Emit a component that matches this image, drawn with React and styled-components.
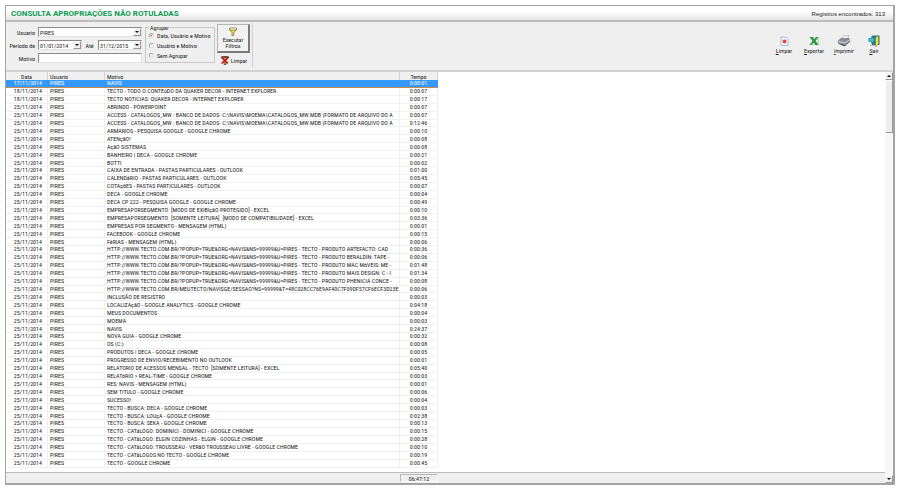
import React, { useState } from 'react';
import styled, { createGlobalStyle } from 'styled-components';

const GlobalStyle = createGlobalStyle`
  * {
    box-sizing: border-box;
  }

  body {
    margin: 0;
    background: #fff;
  }

  body, button, input, select {
    font-family: 'Roboto Condensed', 'Liberation Sans', Arial, sans-serif;
    font-size: 6px;
    line-height: 7px;
    color: #222;
  }
`;

const Page = styled.div`
  display: flex;
  flex-direction: column;
  height: 100vh;
  padding: 5px;
`;

const Window = styled.main`
  flex: 1;
  min-height: 0;
  display: flex;
  flex-direction: column;
  border: 1px solid #a4a4a4;
  border-right: 2px solid #a4a4a4;
  border-bottom: 2px solid #a4a4a4;
  background: #efefef;
`;

const TitleBar = styled.header`
  display: flex;
  align-items: center;
  justify-content: space-between;
  height: 16px;
  padding: 0 8px 0 5px;
  border-bottom: 2px solid #bcbcbc;
  background: linear-gradient(#fff 40%, #e4e4e4);
`;

const Title = styled.h1`
  margin: 0;
  padding-top: 1px;
  font: bold 8px/10px Roboto, 'Liberation Sans', Arial, sans-serif;
  color: #0a9a50;
`;

const Count = styled.span`
  padding-top: 1px;
  font: 6px/8px 'Liberation Sans', Arial, sans-serif;
`;

const Toolbar = styled.section`
  display: flex;
  justify-content: space-between;
  height: 50px;
  padding: 1px 4px 0 6px;
  border-bottom: 2px solid #d2d2d2;
`;

const Filters = styled.form`
  display: flex;
  gap: 2px;
  margin-bottom: 3px;
  padding-right: 2px;
  border-right: 1px solid #d0d0d0;
`;

const Fields = styled.div`
  display: grid;
  grid-template-columns: 24px 104px;
  grid-auto-rows: 10px;
  gap: 3px 2px;
  padding: 4px 1px 0 0;
`;

const Label = styled.label`
  display: flex;
  align-items: center;
  justify-content: flex-end;
  padding-right: 1px;
  white-space: nowrap;
`;

const FieldGroup = styled.div`
  display: flex;
  justify-content: space-between;
`;

const Input = styled.input`
  width: 100%;
  height: 10px;
  padding: 0 1px;
  border: 1px solid #8a8a8a;
  border-right-color: #e2e2e2;
  border-bottom-color: #e2e2e2;
  border-radius: 0;
  background: #fff;
`;

const SelectBox = styled.div`
  position: relative;
  width: ${props => props.$width || '100%'};
`;

const Select = styled.select`
  display: block;
  width: 100%;
  height: 10px;
  padding: 0 9px 0 1px;
  border: 1px solid #8a8a8a;
  border-right-color: #e2e2e2;
  border-bottom-color: #e2e2e2;
  border-radius: 0;
  appearance: none;
  background: #fff;
`;

const SelectArrow = styled.span`
  position: absolute;
  top: 1px;
  right: 1px;
  display: grid;
  place-items: center;
  width: 8px;
  height: 8px;
  border: 1px solid #fafafa;
  border-right-color: #999;
  border-bottom-color: #999;
  background: #eee;
  pointer-events: none;
`;

const Group = styled.fieldset`
  display: flex;
  flex-direction: column;
  gap: 3px;
  width: 70px;
  height: 39px;
  min-width: 0;
  margin: 1px 0 0;
  padding: 1px 0 0 3px;
  border: 1px solid #c8c8c8;
`;

const Legend = styled.legend`
  padding: 0 1px;
`;

const RadioLabel = styled.label`
  display: flex;
  align-items: center;
  gap: 3px;
  white-space: nowrap;
`;

const Radio = styled.input`
  appearance: none;
  width: 5px;
  height: 5px;
  margin: 0;
  border: 1px solid #a0a0a0;
  border-right-color: #ddd;
  border-bottom-color: #ddd;
  border-radius: 50%;
  background: #fff;

  &:checked {
    padding: 1px;
    background: #333;
    background-clip: content-box;
  }
`;

const Actions = styled.div`
  display: flex;
  flex-direction: column;
  align-items: center;
  gap: 2px;
  padding-top: 1px;
`;

const RunButton = styled.button`
  display: flex;
  flex-direction: column;
  align-items: center;
  width: 33px;
  height: 29px;
  padding: 2px 0 0;
  border: 1px solid #b4b4b4;
  border-right: 2px solid #7c7c7c;
  border-bottom: 2px solid #7c7c7c;
  background: #f2f2f2;
  line-height: 6px;
`;

const FlatButton = styled.button`
  display: flex;
  align-items: center;
  gap: 1px;
  padding: 0;
  border: 0;
  background: none;
`;

const ToolButtons = styled.div`
  display: flex;
  align-items: flex-start;
  padding-top: 12px;
`;

const ToolButton = styled.button`
  display: flex;
  flex-direction: column;
  align-items: center;
  width: 30px;
  padding: 0;
  border: 0;
  background: none;
`;

const Content = styled.section`
  flex: 1;
  min-height: 0;
  display: flex;
`;

const GridArea = styled.div`
  flex: 1;
  min-width: 0;
  display: flex;
  flex-direction: column;
  background: #fff;
`;

const TableWrap = styled.div`
  flex: 1;
  min-height: 0;
  padding-bottom: 4px;
  overflow: hidden;
`;

const Table = styled.table`
  width: 432px;
  height: 100%;
  table-layout: fixed;
  border-collapse: separate;
  border-spacing: 0;
`;

const Col = styled.col`
  width: ${props => props.$width};
`;

const Th = styled.th`
  padding: 1px 2px 0;
  border-right: 1px solid #d2d2d2;
  background: #f0f0f0;
  font-weight: normal;
  text-align: ${props => props.$align || 'left'};
`;

const Td = styled.td`
  padding: 0 2px;
  border-right: 1px solid #f0f0f0;
  border-bottom: 1px solid #f0f0f0;
  line-height: 6px;
  overflow: hidden;
  white-space: pre;
  text-align: ${props => props.$align || 'left'};
`;

const DateTd = styled(Td)`
  padding: 0 5px 0 0;
  text-align: right;
`;

const Row = styled.tr`
  background: ${props => (props.$selected ? '#3399ff' : '#fff')};
  color: ${props => (props.$selected ? '#fff' : '#222')};

  ${Td} {
    border-color: ${props => (props.$selected ? '#3399ff' : '#f0f0f0')};
    border-bottom-color: ${props => (props.$selected ? '#c98a4a' : '#f0f0f0')};
  }
`;

const Footer = styled.footer`
  display: flex;
  height: 11px;
  border-top: 1px solid #bcbcbc;
  background: #efefef;
`;

const Total = styled.output`
  width: 38px;
  margin: 1px 0 1px 394px;
  border: 1px solid #bbb;
  border-right-color: #fff;
  border-bottom-color: #fff;
  line-height: 7px;
  text-align: center;
`;

const ScrollTrack = styled.div`
  display: flex;
  flex-direction: column;
  width: 8px;
  background: #f8f8f8;
`;

const ScrollButton = styled.button`
  display: grid;
  place-items: center;
  width: 8px;
  height: 8px;
  padding: 0;
  border: 1px solid #fff;
  border-right-color: #999;
  border-bottom-color: #999;
  background: #eee;
`;

const ScrollThumb = styled.div`
  height: 53px;
  margin-bottom: auto;
  border: 1px solid #fff;
  border-right-color: #999;
  border-bottom-color: #999;
  background: #eee;
`;

const Triangle = ({ up }) => (
  <svg width="4" height="2" viewBox="0 0 4 2">
    <path d={up ? 'M0 2 L2 0 L4 2Z' : 'M0 0 L2 2 L4 0Z'} fill="#111" />
  </svg>
);

const FunnelIcon = () => (
  <svg width="10" height="10" viewBox="0 0 10 10">
    <path d="M1 2 L4 5.5 V9 L6 8 V5.5 L9 2Z" fill="#f6e61e" stroke="#555" strokeWidth=".6" />
    <ellipse cx="5" cy="2" rx="4" ry="1.2" fill="#fff9b0" stroke="#555" strokeWidth=".6" />
  </svg>
);

const FunnelClearIcon = () => (
  <svg width="10" height="10" viewBox="0 0 10 10">
    <path d="M1 2 L4 5.5 V9.5 H6 V5.5 L9 2Z" fill="#c9b04a" stroke="#222" strokeWidth=".6" />
    <path d="M1.5 2 L8 8.5 M8.5 2 L1.5 8.5" stroke="#cc1414" strokeWidth="1.6" />
    <ellipse cx="5" cy="1.8" rx="3.6" ry=".9" fill="#5a4a2a" />
  </svg>
);

const PageIcon = () => (
  <svg width="12" height="12" viewBox="0 0 12 12">
    <path d="M3 2 H8 L10 4 V10.5 H3Z" fill="#f0f5ff" stroke="#93a9d8" strokeWidth=".8" />
    <circle cx="6.5" cy="6.5" r="1.9" fill="#e8453a" />
  </svg>
);

const ExcelIcon = () => (
  <svg width="12" height="12" viewBox="0 0 12 12">
    <rect x="5" y="2.5" width="5.5" height="7" fill="#e4f3e2" stroke="#8fc491" strokeWidth=".6" />
    <path d="M1.5 2 H4.5 L6.3 4.2 L8.5 2 H10.5 L7.6 5.8 L10.5 10 H7.5 L5.8 7.6 L3.5 10 H1.5 L4.6 6Z" fill="#2c9140" />
  </svg>
);

const PrinterIcon = () => (
  <svg width="14" height="12" viewBox="0 0 14 12">
    <path d="M6 1 L12 .5 L10 5 L5 4.5Z" fill="#f5f7fb" stroke="#999" strokeWidth=".5" />
    <path d="M1 6 L4 3.5 L12 3.5 L13 6.5 L8 11 L2 9Z" fill="#8b8d96" stroke="#55565e" strokeWidth=".5" />
    <path d="M1.5 6.3 L7.5 8 L12.5 5" fill="none" stroke="#e2e2ea" strokeWidth=".9" />
    <path d="M4 9.4 L8 10.6" stroke="#333" strokeWidth=".8" />
  </svg>
);

const ExitIcon = () => (
  <svg width="12" height="12" viewBox="0 0 12 12">
    <path d="M4 .5 H11.5 V10 H4Z" fill="#1b7f8c" />
    <path d="M7.5 2.5 L10.5 .8 V9 L7.5 11.8Z" fill="#f7e528" stroke="#555" strokeWidth=".4" />
    <path d="M.8 3.5 H3.5 V1.5 L7 5 L3.5 8.5 V6.5 H.8Z" fill="#35c3dc" stroke="#14606e" strokeWidth=".5" />
    <path d="M2 10.3 H7" stroke="#888" strokeWidth=".7" />
  </svg>
);

const tools = [
  { label: 'Limpar', Icon: PageIcon },
  { label: 'Exportar', Icon: ExcelIcon },
  { label: 'Imprimir', Icon: PrinterIcon },
  { label: 'Sair', Icon: ExitIcon }
];

const groupings = ['Data, Usuário e Motivo', 'Usuário e Motivo', 'Sem Agrupar'];

const popup = 'HTTP://WWW.TECTO.COM.BR/?POPUP=TRUE&ORG=NAVIS&NS=99999&U=PIRES - TECTO - PRODUTO ';

const records = [
  ['17/11/2014', 'NAVIS', '0:00:01'],
  ['18/11/2014', 'TECTO - TODO O CONTEúDO DA QUAKER DECOR - INTERNET EXPLORER', '0:00:07'],
  ['18/11/2014', 'TECTO NOTíCIAS: QUAKER DECOR - INTERNET EXPLORER', '0:00:17'],
  ['25/11/2014', 'ABRINDO - POWERPOINT', '0:00:07'],
  ['25/11/2014', 'ACCESS - CATALOGOS_MW : BANCO DE DADOS- C:\\NAVIS\\MOEMA\\CATALOGOS_MW.MDB (FORMATO DE ARQUIVO DO A', '0:00:07'],
  ['25/11/2014', 'ACCESS - CATALOGOS_MW : BANCO DE DADOS- C:\\NAVIS\\MOEMA\\CATALOGOS_MW.MDB (FORMATO DE ARQUIVO DO A', '0:12:46'],
  ['25/11/2014', 'ARMARIOS - PESQUISA GOOGLE - GOOGLE CHROME', '0:00:10'],
  ['25/11/2014', 'ATENçãO!', '0:00:08'],
  ['25/11/2014', 'AçãO SISTEMAS', '0:00:08'],
  ['25/11/2014', 'BANHEIRO | DECA - GOOGLE CHROME', '0:00:21'],
  ['25/11/2014', 'BOTTI', '0:00:02'],
  ['25/11/2014', 'CAIXA DE ENTRADA - PASTAS PARTICULARES - OUTLOOK', '0:01:00'],
  ['25/11/2014', 'CALENDáRIO - PASTAS PARTICULARES - OUTLOOK', '0:05:45'],
  ['25/11/2014', 'COTAçõES - PASTAS PARTICULARES - OUTLOOK', '0:00:07'],
  ['25/11/2014', 'DECA - GOOGLE CHROME', '0:00:04'],
  ['25/11/2014', 'DECA CP 222 - PESQUISA GOOGLE - GOOGLE CHROME', '0:00:49'],
  ['25/11/2014', 'EMPRESAPORSEGMENTO  [MODO DE EXIBIçãO PROTEGIDO] - EXCEL', '0:00:10'],
  ['25/11/2014', 'EMPRESAPORSEGMENTO  [SOMENTE LEITURA]  [MODO DE COMPATIBILIDADE] - EXCEL', '0:03:36'],
  ['25/11/2014', 'EMPRESAS POR SEGMENTO - MENSAGEM (HTML)', '0:00:01'],
  ['25/11/2014', 'FACEBOOK - GOOGLE CHROME', '0:00:15'],
  ['25/11/2014', 'FéRIAS - MENSAGEM (HTML)', '0:00:06'],
  ['25/11/2014', popup + 'ARTEFACTO: CAD', '0:00:36'],
  ['25/11/2014', popup + 'BERALDIN: TAPE -', '0:00:06'],
  ['25/11/2014', popup + 'MAC MóVEIS: ME -', '0:01:48'],
  ['25/11/2014', popup + 'MAIS DESIGN: C - I', '0:01:34'],
  ['25/11/2014', popup + 'PHENICIA CONCE -', '0:00:08'],
  ['25/11/2014', 'HTTP://WWW.TECTO.COM.BR/MEUTECTO/NAVISGE/SESSAO?NS=99999&T=48C028CC76E9AF40C7F09DF57CF6ECF3D23E', '0:00:06'],
  ['25/11/2014', 'INCLUSÃO DE REGISTRO', '0:00:03'],
  ['25/11/2014', 'LOCALIZAçãO - GOOGLE ANALYTICS - GOOGLE CHROME', '0:04:18'],
  ['25/11/2014', 'MEUS DOCUMENTOS', '0:00:04'],
  ['25/11/2014', 'MOEMA', '0:00:03'],
  ['25/11/2014', 'NAVIS', '0:24:37'],
  ['25/11/2014', 'NOVA GUIA - GOOGLE CHROME', '0:00:32'],
  ['25/11/2014', 'OS (C:)', '0:00:08'],
  ['25/11/2014', 'PRODUTOS | DECA - GOOGLE CHROME', '0:00:05'],
  ['25/11/2014', 'PROGRESSO DE ENVIO/RECEBIMENTO NO OUTLOOK', '0:00:01'],
  ['25/11/2014', 'RELATORIO DE ACESSOS MENSAL - TECTO  [SOMENTE LEITURA] - EXCEL', '0:05:40'],
  ['25/11/2014', 'RELATóRIO > REAL-TIME - GOOGLE CHROME', '0:00:03'],
  ['25/11/2014', 'RES: NAVIS - MENSAGEM (HTML)', '0:00:01'],
  ['25/11/2014', 'SEM TíTULO - GOOGLE CHROME', '0:00:06'],
  ['25/11/2014', 'SUCESSO!', '0:00:04'],
  ['25/11/2014', 'TECTO - BUSCA: DECA - GOOGLE CHROME', '0:00:03'],
  ['25/11/2014', 'TECTO - BUSCA: LOUçA - GOOGLE CHROME', '0:02:38'],
  ['25/11/2014', 'TECTO - BUSCA: SEKA - GOOGLE CHROME', '0:00:13'],
  ['25/11/2014', 'TECTO - CATáLOGO: DOMINICI - DOMINICI - GOOGLE CHROME', '0:00:15'],
  ['25/11/2014', 'TECTO - CATáLOGO: ELGIN COZINHAS - ELGIN - GOOGLE CHROME', '0:00:28'],
  ['25/11/2014', 'TECTO - CATáLOGO: TROUSSEAU - VERãO TROUSSEAU LIVRE - GOOGLE CHROME', '0:00:10'],
  ['25/11/2014', 'TECTO - CATáLOGOS NO TECTO - GOOGLE CHROME', '0:00:19'],
  ['25/11/2014', 'TECTO - GOOGLE CHROME', '0:00:45']
];

const DropDown = ({ id, value, width }) => (
  <SelectBox $width={width}>
    <Select id={id} defaultValue={value}>
      <option>{value}</option>
    </Select>
    <SelectArrow><Triangle /></SelectArrow>
  </SelectBox>
);

function App() {
  const [selected, setSelected] = useState(0);

  return (
    <>
      <GlobalStyle />
      <Page>
        <Window>
          <TitleBar>
            <Title>CONSULTA APROPRIAÇÕES NÃO ROTULADAS</Title>
            <Count>Registros encontrados: 313</Count>
          </TitleBar>

          <Toolbar>
            <Filters onSubmit={e => e.preventDefault()}>
              <Fields>
                <Label htmlFor="usuario">Usuario</Label>
                <DropDown id="usuario" value="PIRES" />
                <Label htmlFor="de">Período de</Label>
                <FieldGroup>
                  <DropDown id="de" value="01/01/2014" width="44px" />
                  <Label htmlFor="ate">Até</Label>
                  <DropDown id="ate" value="31/12/2015" width="44px" />
                </FieldGroup>
                <Label htmlFor="motivo">Motivo</Label>
                <Input id="motivo" type="text" />
              </Fields>

              <Group>
                <Legend>Agrupar</Legend>
                {groupings.map((text, i) => (
                  <RadioLabel key={text}>
                    <Radio type="radio" name="agrupar" defaultChecked={i === 0} />
                    {text}
                  </RadioLabel>
                ))}
              </Group>

              <Actions>
                <RunButton type="submit">
                  <FunnelIcon />
                  <span>Executar</span>
                  <span>Filtros</span>
                </RunButton>
                <FlatButton type="reset">
                  <FunnelClearIcon />
                  Limpar
                </FlatButton>
              </Actions>
            </Filters>

            <ToolButtons>
              {tools.map(({ label, Icon }) => (
                <ToolButton key={label} type="button">
                  <Icon />
                  <span><u>{label[0]}</u>{label.slice(1)}</span>
                </ToolButton>
              ))}
            </ToolButtons>
          </Toolbar>

          <Content>
            <GridArea>
              <TableWrap>
                <Table>
                  <colgroup>
                    <Col $width="42px" />
                    <Col $width="57px" />
                    <Col $width="295px" />
                    <Col $width="38px" />
                  </colgroup>
                  <thead>
                    <tr>
                      <Th $align="center">Data</Th>
                      <Th>Usuario</Th>
                      <Th>Motivo</Th>
                      <Th $align="center">Tempo</Th>
                    </tr>
                  </thead>
                  <tbody>
                    {records.map(([data, motivo, tempo], i) => (
                      <Row key={i} $selected={i === selected} onClick={() => setSelected(i)}>
                        <DateTd>{data}</DateTd>
                        <Td>PIRES</Td>
                        <Td>{motivo}</Td>
                        <Td $align="center">{tempo}</Td>
                      </Row>
                    ))}
                  </tbody>
                </Table>
              </TableWrap>
              <Footer>
                <Total>06:47:12</Total>
              </Footer>
            </GridArea>

            <ScrollTrack>
              <ScrollButton type="button" aria-label="Subir"><Triangle up /></ScrollButton>
              <ScrollThumb />
              <ScrollButton type="button" aria-label="Descer"><Triangle /></ScrollButton>
            </ScrollTrack>
          </Content>
        </Window>
      </Page>
    </>
  );
}

export default App;
